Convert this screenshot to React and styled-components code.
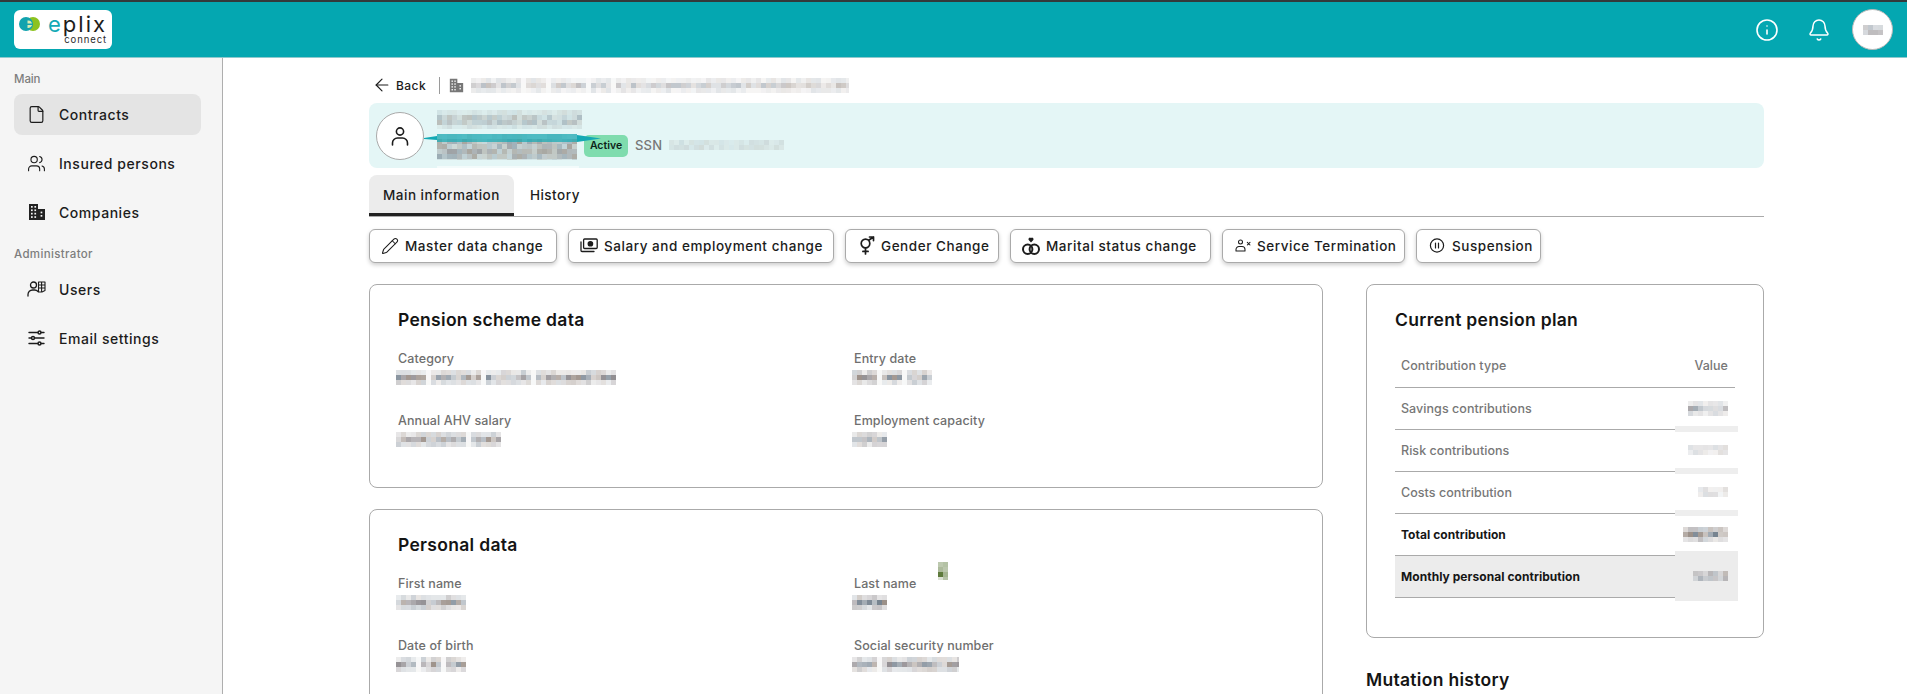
import React from 'react'
import styled, { createGlobalStyle } from 'styled-components'
import { ArrowLeft, Bell, File, Info, Pencil, Users } from 'lucide-react'

const GlobalStyle = createGlobalStyle`
  html, body { margin: 0; padding: 0; background: #fff; overflow: hidden; }
  body { font-family: Inter, "Noto Sans", sans-serif; color: #1c1c1c; }
  * { box-sizing: border-box; }
`

const Page = styled.div`
  width: 1907px;
  height: 694px;
  overflow: hidden;
  display: flex;
  flex-direction: column;
`

const TopBar = styled.header`
  height: 58px;
  flex-shrink: 0;
  display: flex;
  align-items: center;
  justify-content: space-between;
  padding: 0 14px;
  background: #04a7b1;
  border-top: 2px solid #33393b;
  border-bottom: 1px solid #8fc9cd;
`

const Logo = styled.div`
  width: 98px;
  height: 39px;
  background: #fff;
  border-radius: 6px;
  display: flex;
  padding: 3px 5px 0 5px;
`

const LogoText = styled.div`
  display: flex;
  flex-direction: column;
  align-items: flex-end;
  flex: 1;
`

const LogoWord = styled.div`
  font-size: 22px;
  line-height: 22px;
  letter-spacing: 2px;
  color: #1d1d1b;
  span { color: #12a9b5; }
`

const LogoSub = styled.div`
  font-size: 9.5px;
  line-height: 9px;
  letter-spacing: 0.9px;
  color: #2b2b2b;
`

const TopActions = styled.div`
  display: flex;
  align-items: center;
  color: #fff;
`

const TopIcon = styled.div`
  display: flex;
  margin-right: ${({ $gap }) => $gap}px;
`

const UserCircle = styled.div`
  width: 41px;
  height: 41px;
  border-radius: 50%;
  background: #fff;
  border: 1px solid #b9b9b9;
  display: flex;
  align-items: center;
  justify-content: center;
`

const Body = styled.div`
  flex: 1;
  display: flex;
  min-height: 0;
`

const Sidebar = styled.nav`
  width: 223px;
  flex-shrink: 0;
  background: #f5f5f5;
  border-right: 1px solid #aeaeae;
  padding: 13px 21px 0 14px;
`

const SideLabel = styled.div`
  font-size: 11.5px;
  line-height: 16px;
  font-weight: 500;
  letter-spacing: ${({ $tight }) => ($tight ? '-0.1px' : '0.35px')};
  color: #7d7d7d;
  margin-top: ${({ $top }) => $top || 0}px;
  margin-bottom: ${({ $bottom }) => $bottom}px;
`

const SideList = styled.div`
  display: flex;
  flex-direction: column;
  gap: 8px;
`

const SideItem = styled.div`
  height: 41px;
  border-radius: 8px;
  display: flex;
  align-items: center;
  gap: 10px;
  padding: 0 0 1px 10px;
  font-size: 14px;
  font-weight: 500;
  letter-spacing: 0.55px;
  background: ${({ $active }) => ($active ? '#e4e4e4' : 'transparent')};
  color: #1c1c1c;
`

const IconSlot = styled.span`
  width: 25px;
  display: flex;
  justify-content: center;
  flex-shrink: 0;
`

const Main = styled.main`
  flex: 1;
  min-width: 0;
  padding: 17px 143px 0 146px;
`

const Crumbs = styled.div`
  height: 20px;
  display: flex;
  align-items: center;
  padding-left: 3px;
  font-size: 12px;
  font-weight: 500;
  letter-spacing: 0.45px;
`

const BackLink = styled.div`
  display: flex;
  align-items: center;
  gap: 4px;
`

const Divider = styled.span`
  width: 1px;
  height: 17px;
  background: #9a9a9a;
  margin: 0 9px 0 13px;
`

const CrumbIcon = styled.span`
  display: flex;
  margin-right: 7px;
  color: #777;
`

const Banner = styled.section`
  height: 65px;
  margin-top: 8px;
  padding-left: 7px;
  border-radius: 8px;
  background: #e4f6f6;
  display: flex;
  align-items: center;
  gap: 13px;
`

const AvatarCircle = styled.div`
  width: 48px;
  height: 48px;
  margin-top: 1px;
  flex-shrink: 0;
  border-radius: 50%;
  background: #fff;
  border: 1px solid #aaa;
  display: flex;
  align-items: center;
  justify-content: center;
  color: #1c1c1c;
`

const BannerText = styled.div`
  display: flex;
  flex-direction: column;
  gap: 5px;
  margin-top: -2px;
`

const BannerRow = styled.div`
  position: relative;
  display: flex;
  align-items: center;
`

const Streak = styled.svg`
  position: absolute;
  left: -13px;
  top: -1px;
  pointer-events: none;
`

const Chip = styled.span`
  width: 44px;
  height: 22px;
  margin-left: 7px;
  margin-top: -2px;
  border-radius: 5px;
  background: #7fdcae;
  color: #0e1f18;
  font-size: 10.5px;
  font-weight: 600;
  display: flex;
  align-items: center;
  justify-content: center;
`

const Ssn = styled.span`
  margin-left: 7px;
  margin-right: 7px;
  margin-top: -3px;
  font-size: 13px;
  font-weight: 500;
  letter-spacing: 0.2px;
  color: #777;
`

const SsnValue = styled.span`
  margin-top: -3px;
`

const TabBar = styled.div`
  margin-top: 7px;
  height: 42px;
  display: flex;
  gap: 2px;
  border-bottom: 1px solid #aaa;
`

const Tab = styled.div`
  height: 41px;
  padding: 2px 14px 0;
  display: flex;
  align-items: center;
  font-size: 13.5px;
  font-weight: 500;
  letter-spacing: 0.5px;
  border-radius: 8px 8px 0 0;
  background: ${({ $active }) => ($active ? '#ececec' : 'transparent')};
  border-bottom: 3px solid ${({ $active }) => ($active ? '#222' : 'transparent')};
`

const ActionRow = styled.div`
  margin-top: 12px;
  display: flex;
  gap: 11px;
`

const ActionButton = styled.button`
  height: 34px;
  width: ${({ $w }) => $w}px;
  padding: 0 0 1px 11px;
  display: flex;
  align-items: center;
  gap: 6px;
  background: #fff;
  border: 1px solid #aaa;
  border-radius: 6px;
  box-shadow: 0 2px 4px rgba(0, 0, 0, 0.2);
  font-family: inherit;
  font-size: 13.5px;
  font-weight: 500;
  letter-spacing: 0.55px;
  color: #1c1c1c;
  white-space: nowrap;
`

const Columns = styled.div`
  margin-top: 21px;
  display: grid;
  grid-template-columns: 954px 398px;
  column-gap: 43px;
  align-items: start;
`

const Stack = styled.div`
  display: flex;
  flex-direction: column;
  gap: 21px;
`

const Card = styled.section`
  border: 1px solid #aaa;
  border-radius: 8px;
  background: #fff;
  padding: 24px 29px 39px 28px;
`

const CardTitle = styled.h2`
  margin: 0;
  font-size: 17.5px;
  line-height: 22px;
  font-weight: 600;
  letter-spacing: 0.3px;
  color: #141414;
`

const FieldGrid = styled.div`
  margin-top: 19px;
  display: grid;
  grid-template-columns: 440px 440px;
  column-gap: 16px;
  row-gap: 26px;
`

const Field = styled.div`
  position: relative;
  height: 36px;
`

const FieldLabel = styled.div`
  font-size: 12.5px;
  line-height: 18px;
  font-weight: 500;
  letter-spacing: 0.1px;
  color: #6f6f6f;
`

const FieldValue = styled.div`
  margin: 2px 0 0 -2px;
`

const Speck = styled.div`
  position: absolute;
  left: 84px;
  top: -13px;
`

const PlanTable = styled.table`
  width: 340px;
  margin-top: 14px;
  border-collapse: collapse;
  font-size: 12.5px;
  letter-spacing: 0.05px;
`

const Row = styled.tr`
  height: 42px;
  background: ${({ $shade }) => ($shade ? '#ececec' : 'transparent')};
  border-bottom: 1px solid #aaa;
`

const LabelCell = styled.td`
  padding: 0 0 0 6px;
  font-size: ${({ $bold }) => ($bold ? '12px' : '12.5px')};
  font-weight: ${({ $bold }) => ($bold ? 700 : 500)};
  color: ${({ $bold }) => ($bold ? '#161616' : '#777')};
`

const HeadCell = styled.th`
  padding: ${({ $right }) => ($right ? '0 7px 0 0' : '0 0 0 6px')};
  font-weight: 500;
  color: #777;
  text-align: ${({ $right }) => ($right ? 'right' : 'left')};
`

const ValueCell = styled.td`
  position: relative;
  width: 60px;
  padding: 0 7px 0 0;
  &::after {
    content: '';
    position: absolute;
    left: 0;
    right: -3px;
    bottom: ${({ $shade }) => ($shade ? '-4px' : '-3px')};
    height: ${({ $shade }) => ($shade ? '50px' : '6px')};
    background: ${({ $shade }) => ($shade ? '#ececec' : '#eeeeee')};
  }
`

const ValueBox = styled.div`
  position: relative;
  z-index: 1;
  display: flex;
  justify-content: flex-end;
`

const SectionTitle = styled.h2`
  margin: 31px 0 0;
  font-size: 17.5px;
  line-height: 22px;
  font-weight: 600;
  letter-spacing: 0.3px;
  color: #141414;
`

const MosaicSvg = styled.svg`
  display: block;
  flex-shrink: 0;
`

const noise = (a, b) => {
  const v = Math.sin(a * 127.1 + b * 311.7) * 43758.5453
  return v - Math.floor(v)
}

const hues = ['125,110,100', '95,110,125', '110,105,110']

// pixelated stand-in for the censored values in the screenshot
const Mosaic = ({ width, height, seed = 1, strength = 0.75, tint, cell = 5, gaps = [] }) => {
  const cols = Math.ceil(width / cell)
  const rows = Math.ceil(height / cell)
  const rects = []
  for (let y = 0; y < rows; y++) {
    for (let x = 0; x < cols; x++) {
      const inGap = gaps.some((g) => x * cell >= g && x * cell < g + cell)
      const edge = y === 0 || y === rows - 1 ? 0.45 : 1
      const alpha = inGap ? 0.05 : (0.35 + noise(x + seed, y + seed * 3) * 0.65) * strength * edge
      const color = tint || hues[Math.floor(noise(y + seed, x * 2) * 3)]
      rects.push(<rect key={`${x}-${y}`} x={x * cell} y={y * cell} width={cell} height={cell} fill={`rgba(${color},${alpha.toFixed(2)})`} />)
    }
  }
  return (
    <MosaicSvg aria-hidden="true" width={width} height={height} viewBox={`0 0 ${width} ${height}`}>
      {rects}
    </MosaicSvg>
  )
}

const LogoMark = () => (
  <svg width="21" height="14" viewBox="0 0 21 14" style={{ marginTop: 4 }}>
    <circle cx="14" cy="7" r="7" fill="#8cc21f" />
    <circle cx="7" cy="7" r="7" fill="#12a3ae" />
    <path d="M8.500 3.500a4 4 0 0 1 4.500 3H8.500zM8.500 8h4.600a4.500 4.500 0 0 1-4.600 3z" fill="#d9ecb0" />
  </svg>
)

const stroke = { fill: 'none', stroke: 'currentColor', strokeLinecap: 'round', strokeLinejoin: 'round' }

const BuildingIcon = ({ size = 18, color = '#222' }) => (
  <svg width={size} height={size} viewBox="0 0 18 18" style={{ color }}>
    <path d="M1 1h9v16H1zM10 6h7v11h-7z" fill="currentColor" />
    <g fill="#f5f5f5">
      <rect x="3" y="3" width="1.700" height="1.700" /><rect x="6.400" y="3" width="1.700" height="1.700" />
      <rect x="3" y="6.400" width="1.700" height="1.700" /><rect x="6.400" y="6.400" width="1.700" height="1.700" />
      <rect x="3" y="9.800" width="1.700" height="1.700" /><rect x="6.400" y="9.800" width="1.700" height="1.700" />
      <rect x="3" y="13.200" width="1.700" height="1.700" /><rect x="6.400" y="13.200" width="1.700" height="1.700" />
      <rect x="12.600" y="8.600" width="1.700" height="1.700" /><rect x="12.600" y="12" width="1.700" height="1.700" />
    </g>
  </svg>
)

const UserBuildingIcon = () => (
  <svg width="19" height="16" viewBox="0 0 19 16" {...stroke} strokeWidth="1.3">
    <circle cx="6.500" cy="4" r="3" />
    <path d="M1 15v-1.500A4.500 4.500 0 0 1 5.500 9h2A4.500 4.500 0 0 1 11 10.500" />
    <path d="M11.500 1h6.500v8.500l-3 1.500h-3.500zM14.600 1v9M11.500 4h6.500M11.500 7h6.500" strokeWidth="1.100" />
  </svg>
)

const SettingsIcon = () => (
  <svg width="17" height="16" viewBox="0 0 17 16" {...stroke} strokeWidth="1.400">
    <path d="M1 2.500h9M13 2.500h3M1 8h2.500M6.500 8H16M1 13.500h9M13 13.500h3" />
    <circle cx="11.500" cy="2.500" r="1.500" />
    <circle cx="5" cy="8" r="1.500" />
    <circle cx="11.500" cy="13.500" r="1.500" />
  </svg>
)

const PersonIcon = () => (
  <svg width="18" height="19" viewBox="0 0 18 19" {...stroke} strokeWidth="1.600">
    <circle cx="9" cy="4.500" r="3.600" />
    <path d="M1.500 18v-2a5 5 0 0 1 5-5h5a5 5 0 0 1 5 5v2" />
  </svg>
)

const MoneyIcon = () => (
  <svg width="18" height="15" viewBox="0 0 18 15" {...stroke} strokeWidth="1.300">
    <rect x="3.600" y="1" width="13.600" height="9.500" rx="1" />
    <circle cx="10.400" cy="5.750" r="2.200" fill="currentColor" />
    <path d="M1 4v8.500a1 1 0 0 0 1 1h12" />
  </svg>
)

const GenderIcon = () => (
  <svg width="18" height="19" viewBox="-1.500 0 18 19" {...stroke} strokeWidth="1.700">
    <circle cx="7" cy="7.500" r="4.300" />
    <path d="M10.200 4.300 15 1M11 1h4v3.600M7 12v6M4.400 15.400h5.200" />
  </svg>
)

const RingsIcon = () => (
  <svg width="18" height="20" viewBox="0 0 18 20" {...stroke} strokeWidth="2">
    <circle cx="5.700" cy="13.200" r="4.700" />
    <circle cx="12.300" cy="13.200" r="4.700" />
    <path d="M9 6.400 6.700 4a1.500 1.500 0 0 1 2.300-1.900A1.500 1.500 0 0 1 11.300 4z" fill="currentColor" stroke="none" />
  </svg>
)

const TerminationIcon = () => (
  <svg width="17" height="13" viewBox="-1 0 17 13" {...stroke} strokeWidth="1.050">
    <circle cx="5.500" cy="3" r="2" />
    <path d="M1 12v-1.500A3 3 0 0 1 4 7.500h3a3 3 0 0 1 3 3V12zM12.300 3.300l2.700 2.700M15 3.300l-2.700 2.700" />
  </svg>
)

const PauseIcon = () => (
  <svg width="18" height="15" viewBox="-1.500 0 18 15" {...stroke} strokeWidth="1.200">
    <circle cx="7.500" cy="7.500" r="6.600" />
    <path d="M6 5v5M9 5v5" />
  </svg>
)

const actions = [
  { label: 'Master data change', icon: <Pencil size={18} strokeWidth={1.4} />, w: 188 },
  { label: 'Salary and employment change', icon: <MoneyIcon />, w: 266 },
  { label: 'Gender Change', icon: <GenderIcon />, w: 154 },
  { label: 'Marital status change', icon: <RingsIcon />, w: 201 },
  { label: 'Service Termination', icon: <TerminationIcon />, w: 183 },
  { label: 'Suspension', icon: <PauseIcon />, w: 125 },
]

const plan = [
  { label: 'Savings contributions', w: 40, h: 15, seed: 3, strength: 0.6 },
  { label: 'Risk contributions', w: 40, h: 10, seed: 5, strength: 0.5 },
  { label: 'Costs contribution', w: 30, h: 10, seed: 7, strength: 0.5 },
  { label: 'Total contribution', w: 45, h: 15, seed: 9, bold: true, strength: 0.95 },
  { label: 'Monthly personal contribution', w: 35, h: 10, seed: 11, bold: true, shade: true, strength: 1 },
]

export default function App() {
  return (
    <>
      <GlobalStyle />
      <Page>
        <TopBar>
          <Logo>
            <LogoMark />
            <LogoText>
              <LogoWord><span>e</span>plix</LogoWord>
              <LogoSub>connect</LogoSub>
            </LogoText>
          </Logo>
          <TopActions>
            <TopIcon $gap={28}><Info size={24} strokeWidth={1.6} /></TopIcon>
            <TopIcon $gap={21}><Bell size={24} strokeWidth={1.5} /></TopIcon>
            <UserCircle><Mosaic width={20} height={10} seed={4} strength={1} /></UserCircle>
          </TopActions>
        </TopBar>
        <Body>
          <Sidebar>
            <SideLabel $tight $bottom={7}>Main</SideLabel>
            <SideList>
              <SideItem $active><IconSlot><File size={19} strokeWidth={1.5} /></IconSlot>Contracts</SideItem>
              <SideItem><IconSlot><Users size={19} strokeWidth={1.4} /></IconSlot>Insured persons</SideItem>
              <SideItem><IconSlot><BuildingIcon /></IconSlot>Companies</SideItem>
            </SideList>
            <SideLabel $top={13} $bottom={7}>Administrator</SideLabel>
            <SideList>
              <SideItem><IconSlot><UserBuildingIcon /></IconSlot>Users</SideItem>
              <SideItem><IconSlot><SettingsIcon /></IconSlot>Email settings</SideItem>
            </SideList>
          </Sidebar>
          <Main>
            <Crumbs>
              <BackLink><ArrowLeft size={20} strokeWidth={1.4} />Back</BackLink>
              <Divider />
              <CrumbIcon><BuildingIcon size={15} color="#777" /></CrumbIcon>
              <Mosaic width={378} height={15} seed={2} strength={0.42} gaps={[50, 75, 115, 140]} />
            </Crumbs>
            <Banner>
              <AvatarCircle><PersonIcon /></AvatarCircle>
              <BannerText>
                <Mosaic width={145} height={19} seed={6} strength={0.4} />
                <BannerRow>
                  <Mosaic width={140} height={26} seed={8} strength={0.6} />
                  <Chip>Active</Chip>
                  <Ssn>SSN</Ssn>
                  <SsnValue><Mosaic width={115} height={10} seed={10} strength={0.42} /></SsnValue>
                  <Streak width="190" height="40" viewBox="0 0 190 40">
                    <path d="M0 5 13 3v4L0 6z" fill="#14a9b4" />
                    <rect x="13" y="1" width="140" height="8" fill="rgba(20,170,180,0.7)" />
                    <path d="M153 2l24 3.500-24 3.500z" fill="#14a9b4" />
                    <rect x="13" y="33" width="142" height="6" fill="rgba(255,255,255,0.55)" />
                  </Streak>
                </BannerRow>
              </BannerText>
            </Banner>
            <TabBar>
              <Tab $active>Main information</Tab>
              <Tab>History</Tab>
            </TabBar>
            <ActionRow>
              {actions.map((action) => (
                <ActionButton key={action.label} $w={action.w}>
                  {action.icon}
                  {action.label}
                </ActionButton>
              ))}
            </ActionRow>
            <Columns>
              <Stack>
                <Card>
                  <CardTitle>Pension scheme data</CardTitle>
                  <FieldGrid>
                    <Field><FieldLabel>Category</FieldLabel><FieldValue><Mosaic width={220} height={15} seed={12} gaps={[30, 85, 135]} /></FieldValue></Field>
                    <Field><FieldLabel>Entry date</FieldLabel><FieldValue><Mosaic width={80} height={15} seed={13} gaps={[25, 50]} /></FieldValue></Field>
                    <Field><FieldLabel>Annual AHV salary</FieldLabel><FieldValue><Mosaic width={105} height={15} seed={14} gaps={[70]} /></FieldValue></Field>
                    <Field><FieldLabel>Employment capacity</FieldLabel><FieldValue><Mosaic width={35} height={15} seed={15} /></FieldValue></Field>
                  </FieldGrid>
                </Card>
                <Card>
                  <CardTitle>Personal data</CardTitle>
                  <FieldGrid>
                    <Field><FieldLabel>First name</FieldLabel><FieldValue><Mosaic width={70} height={15} seed={16} /></FieldValue></Field>
                    <Field>
                      <FieldLabel>Last name</FieldLabel>
                      <Speck><Mosaic width={10} height={18} seed={20} strength={1} tint="85,115,50" /></Speck>
                      <FieldValue><Mosaic width={35} height={15} seed={17} strength={0.9} /></FieldValue>
                    </Field>
                    <Field><FieldLabel>Date of birth</FieldLabel><FieldValue><Mosaic width={70} height={15} seed={18} gaps={[20, 45]} /></FieldValue></Field>
                    <Field><FieldLabel>Social security number</FieldLabel><FieldValue><Mosaic width={107} height={15} seed={19} gaps={[25]} /></FieldValue></Field>
                  </FieldGrid>
                </Card>
              </Stack>
              <div>
                <Card>
                  <CardTitle>Current pension plan</CardTitle>
                  <PlanTable>
                    <tbody>
                      <Row>
                        <HeadCell>Contribution type</HeadCell>
                        <HeadCell $right>Value</HeadCell>
                      </Row>
                      {plan.map((row) => (
                        <Row key={row.label} $shade={row.shade}>
                          <LabelCell $bold={row.bold}>{row.label}</LabelCell>
                          <ValueCell $shade={row.shade}>
                            <ValueBox><Mosaic width={row.w} height={row.h} seed={row.seed} strength={row.strength} /></ValueBox>
                          </ValueCell>
                        </Row>
                      ))}
                    </tbody>
                  </PlanTable>
                </Card>
                <SectionTitle>Mutation history</SectionTitle>
              </div>
            </Columns>
          </Main>
        </Body>
      </Page>
    </>
  )
}
